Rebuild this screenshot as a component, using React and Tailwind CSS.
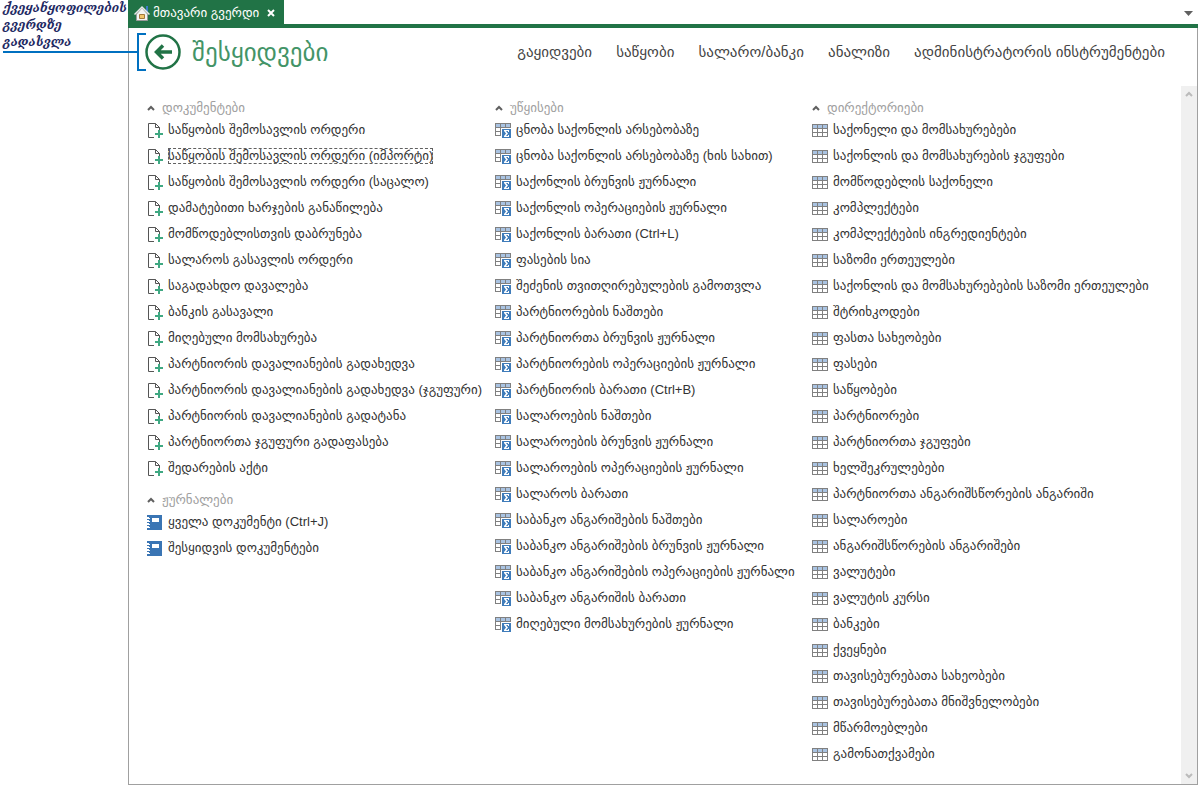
import { useState } from 'react';

const documents = [
  'საწყობის შემოსავლის ორდერი',
  'საწყობის შემოსავლის ორდერი (იმპორტი)',
  'საწყობის შემოსავლის ორდერი (საცალო)',
  'დამატებითი ხარჯების განაწილება',
  'მომწოდებლისთვის დაბრუნება',
  'სალაროს გასავლის ორდერი',
  'საგადახდო დავალება',
  'ბანკის გასავალი',
  'მიღებული მომსახურება',
  'პარტნიორის დავალიანების გადახედვა',
  'პარტნიორის დავალიანების გადახედვა (ჯგუფური)',
  'პარტნიორის დავალიანების გადატანა',
  'პარტნიორთა ჯგუფური გადაფასება',
  'შედარების აქტი',
];

const journals = ['ყველა დოკუმენტი (Ctrl+J)', 'შესყიდვის დოკუმენტები'];

const reports = [
  'ცნობა საქონლის არსებობაზე',
  'ცნობა საქონლის არსებობაზე (ხის სახით)',
  'საქონლის ბრუნვის ჟურნალი',
  'საქონლის ოპერაციების ჟურნალი',
  'საქონლის ბარათი (Ctrl+L)',
  'ფასების სია',
  'შეძენის თვითღირებულების გამოთვლა',
  'პარტნიორების ნაშთები',
  'პარტნიორთა ბრუნვის ჟურნალი',
  'პარტნიორების ოპერაციების ჟურნალი',
  'პარტნიორის ბარათი (Ctrl+B)',
  'სალაროების ნაშთები',
  'სალაროების ბრუნვის ჟურნალი',
  'სალაროების ოპერაციების ჟურნალი',
  'სალაროს ბარათი',
  'საბანკო ანგარიშების ნაშთები',
  'საბანკო ანგარიშების ბრუნვის ჟურნალი',
  'საბანკო ანგარიშების ოპერაციების ჟურნალი',
  'საბანკო ანგარიშის ბარათი',
  'მიღებული მომსახურების ჟურნალი',
];

const directories = [
  'საქონელი და მომსახურებები',
  'საქონლის და მომსახურების ჯგუფები',
  'მომწოდებლის საქონელი',
  'კომპლექტები',
  'კომპლექტების ინგრედიენტები',
  'საზომი ერთეულები',
  'საქონლის და მომსახურებების საზომი ერთეულები',
  'შტრიხკოდები',
  'ფასთა სახეობები',
  'ფასები',
  'საწყობები',
  'პარტნიორები',
  'პარტნიორთა ჯგუფები',
  'ხელშეკრულებები',
  'პარტნიორთა ანგარიშსწორების ანგარიში',
  'სალაროები',
  'ანგარიშსწორების ანგარიშები',
  'ვალუტები',
  'ვალუტის კურსი',
  'ბანკები',
  'ქვეყნები',
  'თავისებურებათა სახეობები',
  'თავისებურებათა მნიშვნელობები',
  'მწარმოებლები',
  'გამონათქვამები',
];

const sections = ['გაყიდვები', 'საწყობი', 'სალარო/ბანკი', 'ანალიზი', 'ადმინისტრატორის ინსტრუმენტები'];

function DocumentIcon() {
  return (
    <svg width="16" height="16" viewBox="0 0 16 16" fill="none" className="shrink-0">
      <path d="M7 15.5H1.5V1.5H8.5L12.5 5.500V8M8.500 1.500V5.500H12.500" stroke="#555" />
      <path d="M11 8h2v3h3v2h-3v3h-2v-3H8v-2h3z" fill="#3fa882" />
    </svg>
  );
}

function JournalIcon() {
  return (
    <svg width="16" height="16" viewBox="0 0 16 16" shapeRendering="crispEdges" className="shrink-0">
      <path d="M2 1h13v15H2z" fill="#3a75b4" />
      <path d="M0 1h2v2H0zM0 5h2v1H0zM0 8h2v1H0zM0 11h2v1H0zM0 14h2v2H0z" fill="#3a75b4" />
      <path d="M5 4h7v4H5z" fill="#fff" />
      <path d="M2 4h1v1H2zM2 7h1v1H2zM2 10h1v1H2zM2 13h1v1H2z" fill="#fff" />
    </svg>
  );
}

function ReportIcon() {
  return (
    <svg width="16" height="16" viewBox="0 0 16 16" fill="none" shapeRendering="crispEdges" className="shrink-0">
      <path d="M0 1h16v4H0z" fill="#a9c3e2" />
      <path d="M0 1.500H16M0 5.500H16M.5 1V14M5.500 1V14M10.500 1V6M15.500 1V6M0 9.500H6M0 13.500H6" stroke="#808080" />
      <path d="M6 6h10v10H6z" fill="#fff" />
      <path d="M7 7h9v9H7z" fill="#3f7cba" />
      <path d="M9 8h5v2h-1V9h-2l2 2.500L11 14h2v-1h1v2H9v-1l2-2.500L9 9z" fill="#fff" shapeRendering="auto" />
    </svg>
  );
}

function TableIcon() {
  return (
    <svg width="16" height="16" viewBox="0 0 16 16" fill="none" shapeRendering="crispEdges" className="shrink-0">
      <path d="M0 2h16v4H0z" fill="#a9c3e2" />
      <path d="M0 2.500H16M0 6.500H16M0 10.500H16M0 14.500H16M.5 2V15M5.500 2V15M10.500 2V15M15.500 2V15" stroke="#808080" />
    </svg>
  );
}

function HomeIcon() {
  return (
    <svg width="16" height="16" viewBox="0 0 16 16" fill="none" className="shrink-0">
      <path d="M12 1h2v6h-2z" fill="#3d7cc9" />
      <path d="M2.500 9L8 3L13.500 9V15.500H2.500z" fill="#f4f4f4" stroke="#9a9a9a" />
      <path d="M.5 9.500L8 2L15.500 9.500" stroke="#e8e8e8" strokeWidth="1.500" />
      <path d="M5.500 9.500h5v4h-5z" fill="#f2c56d" stroke="#a4793c" />
    </svg>
  );
}

function Chevron({ className, down }) {
  return (
    <svg width="8" height="6" viewBox="0 0 8 6" fill="none" className={className}>
      <path d={down ? 'M1 1L4 4L7 1' : 'M1 5L4 2L7 5'} stroke="currentColor" strokeWidth="2" />
    </svg>
  );
}

function Group({ title, items, icon: Icon, focused }) {
  const [open, setOpen] = useState(true);

  return (
    <section>
      <h2 className="-mb-px h-5">
        <button
          onClick={() => setOpen(!open)}
          className="flex h-5 items-center gap-[7px] text-[13px] text-[#a0a0a0]"
        >
          <Chevron className="text-[#606060]" down={!open} />
          {title}
        </button>
      </h2>
      {open && (
        <ul>
          {items.map((item) => (
            <li key={item} className="flex h-[26px] items-center gap-[5px]">
              <Icon />
              <a
                href="#"
                className={
                  item === focused
                    ? 'whitespace-nowrap outline-1 -outline-offset-1 outline-dashed outline-[#606060]'
                    : 'whitespace-nowrap'
                }
              >
                {item}
              </a>
            </li>
          ))}
        </ul>
      )}
    </section>
  );
}

export default function App() {
  return (
    <div className="flex h-screen bg-white font-['Liberation_Sans','DejaVu_Sans',sans-serif] text-[13px] leading-4 text-[#333]">
      <aside className="relative w-32 shrink-0 pl-[3px] font-['DejaVu_Serif',serif] text-[12px] leading-[17px] font-bold text-[#1f2a63] italic">
        <p>
          ქვეყანყოფილების
          <br />
          გვერდზე
          <br />
          გადასვლა
        </p>
        {/* callout line and bracket pointing at the back button */}
        <div className="absolute top-[33px] left-[3px] z-10 flex items-center">
          <div className="h-0.5 w-[134px] bg-[#0070c0]" />
          <div className="h-[38px] w-[9px] border-y-2 border-l-2 border-[#0070c0]" />
        </div>
      </aside>

      <div className="flex min-w-0 flex-1 flex-col">
        <div className="flex h-7 shrink-0 items-start justify-between border-b-4 border-[#217346]">
          <div className="flex h-6 items-center bg-[#217346] pt-0.5 pr-[5px] pl-[6px] text-white">
            <HomeIcon />
            <span className="ml-[3px] whitespace-nowrap">მთავარი გვერდი</span>
            <button aria-label="Close tab" className="ml-1 flex size-4 items-center justify-center">
              <svg width="8" height="8" viewBox="0 0 8 8">
                <path d="M1 1L7 7M7 1L1 7" stroke="#fff" strokeWidth="2" />
              </svg>
            </button>
          </div>
          <button aria-label="Tab list" className="mt-[11px] mr-[5px]">
            <svg width="9" height="5" viewBox="0 0 9 5">
              <path d="M0 0H9L4.500 5z" fill="#606060" />
            </svg>
          </button>
        </div>

        <main className="flex min-h-0 flex-1 flex-col border-x border-b border-[#a0a0a0]">
          <header className="flex h-[58px] shrink-0 items-start justify-between pt-1.5 pr-8 pl-4">
            <div className="flex items-center gap-[11px]">
              <button aria-label="Back">
                <svg width="36" height="36" viewBox="0 0 36 36" fill="none" stroke="#217346">
                  <circle cx="18" cy="18" r="16.500" strokeWidth="2.500" />
                  <path d="M27 18H11M18 11.500L11.500 18L18 24.500" strokeWidth="3.500" />
                </svg>
              </button>
              <h1 className="text-[25px] leading-9 whitespace-nowrap text-[#439467]">შესყიდვები</h1>
            </div>
            <nav className="flex h-9 items-center gap-6 text-[15px] text-[#444]">
              {sections.map((section) => (
                <a key={section} href="#" className="whitespace-nowrap">
                  {section}
                </a>
              ))}
            </nav>
          </header>

          <div className="flex min-h-0 flex-1">
            <div className="grid min-w-0 flex-1 grid-cols-[348fr_317fr_369fr] overflow-hidden pt-3 pl-[18px]">
              <div className="flex min-w-0 flex-col gap-[9px]">
                <Group title="დოკუმენტები" items={documents} icon={DocumentIcon} focused={documents[1]} />
                <Group title="ჟურნალები" items={journals} icon={JournalIcon} />
              </div>
              <div className="min-w-0">
                <Group title="უწყისები" items={reports} icon={ReportIcon} />
              </div>
              <div className="min-w-0">
                <Group title="დირექტორიები" items={directories} icon={TableIcon} />
              </div>
            </div>
            <div className="flex w-4 shrink-0 flex-col items-center justify-between bg-[#f0f0f0] py-[5px] text-[#bbb]">
              <button aria-label="Scroll up">
                <Chevron />
              </button>
              <button aria-label="Scroll down">
                <Chevron down />
              </button>
            </div>
          </div>
        </main>
      </div>
    </div>
  );
}
